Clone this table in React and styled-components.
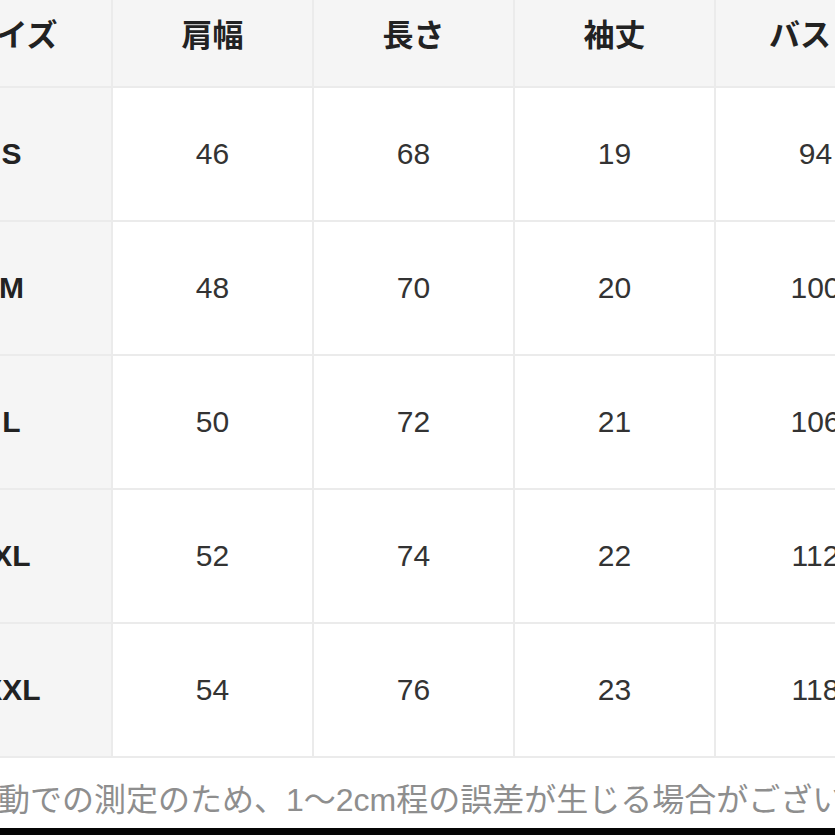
import React from "react";
import styled, { createGlobalStyle } from "styled-components";

const GlobalStyle = createGlobalStyle`
  html, body {
    margin: 0;
    padding: 0;
    background: #ffffff;
  }
  body {
    font-family: "Liberation Sans", "Noto Sans CJK JP", sans-serif;
  }
`;

const Page = styled.div`
  width: 835px;
  height: 835px;
  overflow: hidden;
  display: flex;
  flex-direction: column;
  background: #ffffff;
`;

const Table = styled.div`
  display: grid;
  grid-template-columns: repeat(5, 199px);
  grid-template-rows: 86px repeat(5, 132px);
  gap: 2px;
  padding-bottom: 2px;
  margin-left: -88px;
  width: max-content;
  background: #ebebeb;
`;

const Cell = styled.div`
  display: flex;
  justify-content: center;
  align-items: ${(p) => (p.$head ? "flex-start" : "center")};
  padding-top: ${(p) => (p.$head ? "17px" : "0")};
  box-sizing: border-box;
  background: ${(p) => (p.$grey ? "#f5f5f5" : "#ffffff")};
  color: ${(p) => (p.$bold ? "#222222" : "#333333")};
  font-family: ${(p) =>
    p.$head
      ? `"Noto Sans CJK JP", "Liberation Sans", sans-serif`
      : `"Liberation Sans", "Noto Sans CJK JP", sans-serif`};
  font-size: ${(p) => (p.$head ? "31px" : "30px")};
  font-weight: ${(p) => (p.$bold ? 700 : 400)};
  line-height: 1;
  white-space: nowrap;
`;

const Caption = styled.div`
  flex: 1;
  padding-top: 14px;
  margin-left: -66px;
  line-height: 56px;
  font-size: 32px;
  color: #8e8e8e;
  white-space: nowrap;
  font-family: "Liberation Sans", "Noto Sans CJK JP", sans-serif;
`;

const BlackBar = styled.div`
  height: 8px;
  background: #050505;
`;

const headers = ["サイズ", "肩幅", "長さ", "袖丈", "バスト"];

const rows = [
  ["S", 46, 68, 19, 94],
  ["M", 48, 70, 20, 100],
  ["L", 50, 72, 21, 106],
  ["XL", 52, 74, 22, 112],
  ["XXL", 54, 76, 23, 118],
];

export default function App() {
  return (
    <>
      <GlobalStyle />
      <Page>
        <Table>
          {headers.map((h) => (
            <Cell key={h} $head $grey $bold>
              {h}
            </Cell>
          ))}
          {rows.map((row) =>
            row.map((v, i) => (
              <Cell key={row[0] + i} $grey={i === 0} $bold={i === 0}>
                {v}
              </Cell>
            ))
          )}
        </Table>
        <Caption>
          ※手動での測定のため、1〜2cm程の誤差が生じる場合がございます。
        </Caption>
        <BlackBar />
      </Page>
    </>
  );
}
